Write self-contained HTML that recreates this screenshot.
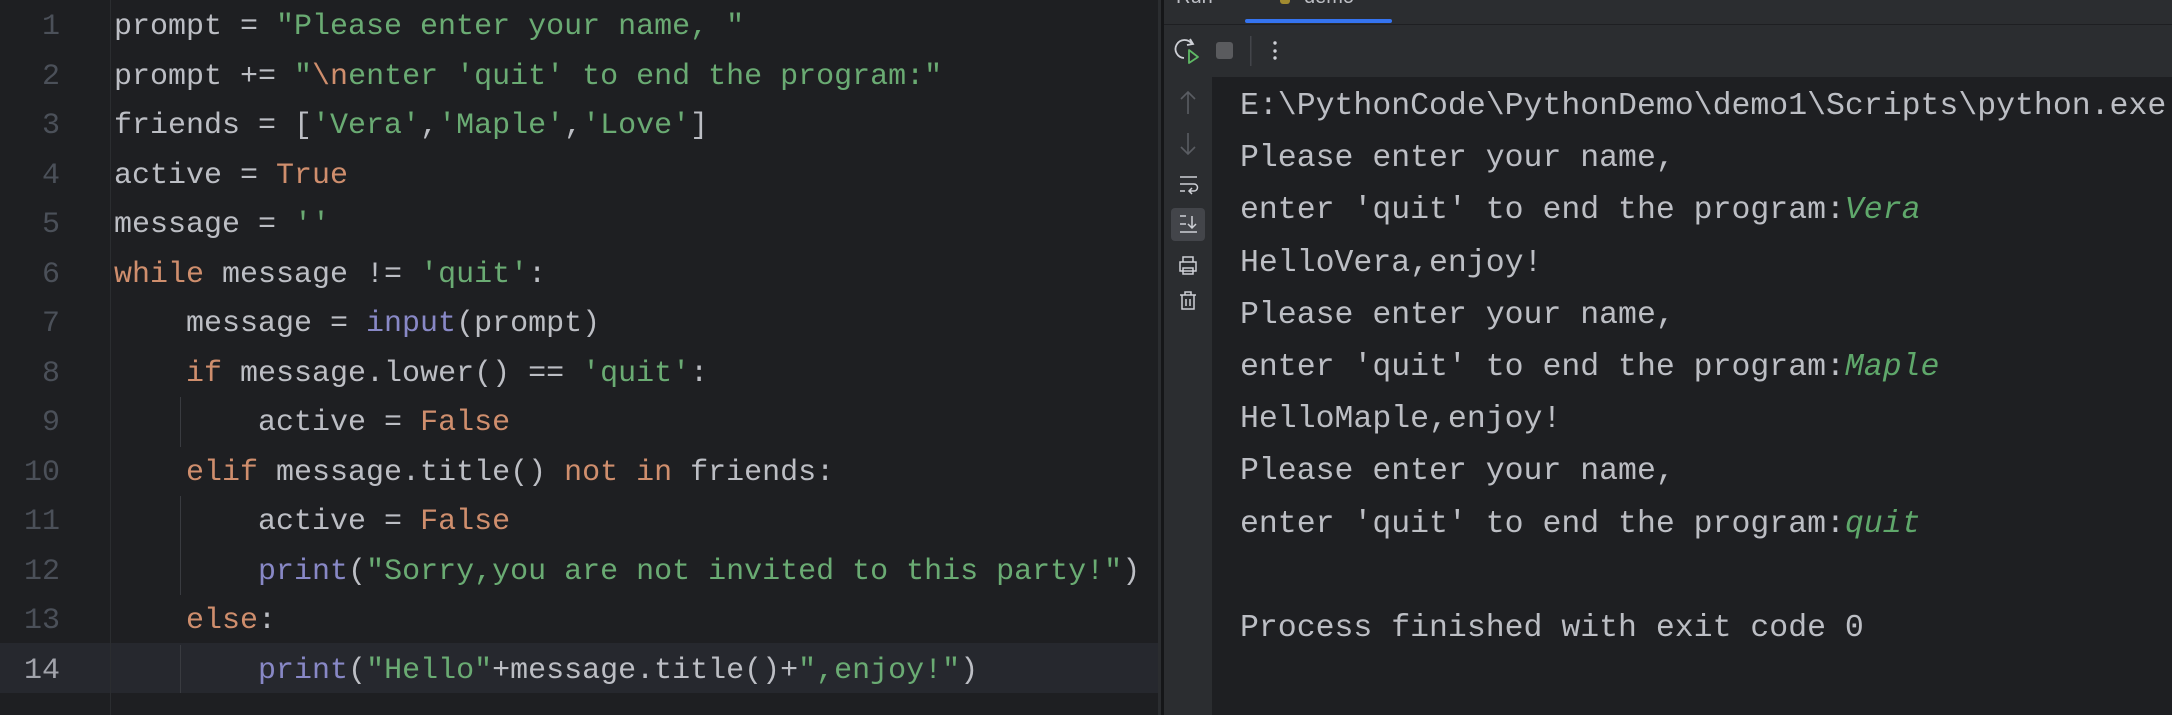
<!DOCTYPE html>
<html><head><meta charset="utf-8">
<style>
*{margin:0;padding:0;box-sizing:border-box}
body{width:2172px;height:715px;background:#1e1f22;overflow:hidden;position:relative;font-family:"Liberation Mono","DejaVu Sans Mono",monospace;font-size:30px;color:#bcbec4}
#ed{position:absolute;left:0;top:0;width:1161px;height:715px;background:#1e1f22}
.ln{position:absolute;left:0;width:60px;text-align:right;color:#4b5059;height:49.5px;line-height:49.5px}
.cl{position:absolute;left:114px;white-space:pre;height:49.5px;line-height:49.5px}
.s{color:#6aab73}.k{color:#cf8e6d}.b{color:#8888c6}
.g{position:absolute;width:1px;background:#393b40;left:180px}
#con{position:absolute;left:1161px;top:0;width:1011px;height:715px;background:#1e1f22;border-left:3px solid #151618;font-size:31.5px}
.cline{position:absolute;left:76px;white-space:pre;height:52.2px;line-height:52.2px}
.u{color:#5fa86b;font-style:italic}
</style></head><body>
<div id="ed">
<div style="position:absolute;left:0;top:643px;width:1161px;height:50px;background:#26282e"></div>
<div style="position:absolute;left:110px;top:0;width:1px;height:715px;background:#2b2d30"></div>
<div style="position:absolute;left:1158px;top:0;width:3px;height:715px;background:#2b2d30"></div>
<div class="g" style="top:397px;height:50px"></div>
<div class="g" style="top:496px;height:99px"></div>
<div class="g" style="top:645px;height:48px"></div>
<div class="ln" style="top:3px">1</div>
<div class="ln" style="top:52.5px">2</div>
<div class="ln" style="top:102px">3</div>
<div class="ln" style="top:151.5px">4</div>
<div class="ln" style="top:201px">5</div>
<div class="ln" style="top:250.5px">6</div>
<div class="ln" style="top:300px">7</div>
<div class="ln" style="top:349.5px">8</div>
<div class="ln" style="top:399px">9</div>
<div class="ln" style="top:448.5px">10</div>
<div class="ln" style="top:498px">11</div>
<div class="ln" style="top:547.5px">12</div>
<div class="ln" style="top:597px">13</div>
<div class="ln" style="top:646.5px;color:#a1a3ab">14</div>
<div class="cl" style="top:3px">prompt = <span class="s">"Please enter your name, "</span></div>
<div class="cl" style="top:52.5px">prompt += <span class="s">"</span><span class="k">\n</span><span class="s">enter 'quit' to end the program:"</span></div>
<div class="cl" style="top:102px">friends = [<span class="s">'Vera'</span>,<span class="s">'Maple'</span>,<span class="s">'Love'</span>]</div>
<div class="cl" style="top:151.5px">active = <span class="k">True</span></div>
<div class="cl" style="top:201px">message = <span class="s">''</span></div>
<div class="cl" style="top:250.5px"><span class="k">while</span> message != <span class="s">'quit'</span>:</div>
<div class="cl" style="top:300px">    message = <span class="b">input</span>(prompt)</div>
<div class="cl" style="top:349.5px">    <span class="k">if</span> message.lower() == <span class="s">'quit'</span>:</div>
<div class="cl" style="top:399px">        active = <span class="k">False</span></div>
<div class="cl" style="top:448.5px">    <span class="k">elif</span> message.title() <span class="k">not in</span> friends:</div>
<div class="cl" style="top:498px">        active = <span class="k">False</span></div>
<div class="cl" style="top:547.5px">        <span class="b">print</span>(<span class="s">"Sorry,you are not invited to this party!"</span>)</div>
<div class="cl" style="top:597px">    <span class="k">else</span>:</div>
<div class="cl" style="top:646.5px">        <span class="b">print</span>(<span class="s">"Hello"</span>+message.title()+<span class="s">",enjoy!"</span>)</div>
</div>
<div id="con">
<div style="position:absolute;left:0;top:0;width:1011px;height:77px;background:#2b2d30"></div>
<div style="position:absolute;left:0;top:24px;width:1011px;height:1px;background:#1e1f22"></div>
<div style="position:absolute;left:81px;top:19px;width:147px;height:4px;background:#3574f0;border-radius:2px"></div>
<div style="position:absolute;left:12px;top:-14px;font-family:'Liberation Sans',sans-serif;font-size:20px;color:#bcbec4">Run</div>
<div style="position:absolute;left:116px;top:-4px;width:10px;height:8px;background:#a08a30;border-radius:3px"></div>
<div style="position:absolute;left:140px;top:-14px;font-family:'Liberation Sans',sans-serif;font-size:20px;color:#bcbec4">demo</div>
<svg style="position:absolute;left:0;top:30px" width="160" height="45">
<path d="M28 14 A9 9 0 1 0 20 28" fill="none" stroke="#ced0d6" stroke-width="1.8"/>
<path d="M26 9 L29 14 L23 15" fill="none" stroke="#ced0d6" stroke-width="1.8"/>
<path d="M25 20 L34 27 L25 33 Z" fill="none" stroke="#5fb865" stroke-width="1.8" stroke-linejoin="round"/>
<rect x="52" y="12" width="17" height="17" rx="3" fill="#5a5b5e"/>
<rect x="86" y="6" width="1.5" height="30" fill="#43454a"/>
<circle cx="111" cy="13" r="1.7" fill="#ced0d6"/><circle cx="111" cy="21" r="1.7" fill="#ced0d6"/><circle cx="111" cy="28" r="1.7" fill="#ced0d6"/>
</svg>
<div style="position:absolute;left:0;top:77px;width:48px;height:638px;background:#2b2d30"></div>
<svg style="position:absolute;left:0;top:77px" width="48" height="260">
<path d="M24 15 V37 M17 22 L24 15 L31 22" fill="none" stroke="#5a5d63" stroke-width="1.6"/>
<path d="M24 56 V77 M17 70 L24 77 L31 70" fill="none" stroke="#5a5d63" stroke-width="1.6"/>
<path d="M16 100 H33 M16 107 H30 A3.5 3.5 0 0 1 30 114 H26 M28 111 L25 114 L28 117 M16 114 H21" fill="none" stroke="#ced0d6" stroke-width="1.5"/>
<rect x="7" y="131" width="34" height="33" rx="4" fill="#43454a"/>
<path d="M16 139 H22 M16 147 H22 M16 155 H33 M28 139 V151 M24 147 L28 151 L32 147" fill="none" stroke="#ced0d6" stroke-width="1.5"/>
<path d="M19 185 V180 H29 V185 M16 185 H32 V194 H16 Z M19 191 H29 V197 H19 Z" fill="none" stroke="#ced0d6" stroke-width="1.5"/>
<path d="M16 218 H32 M21 218 V215 H27 V218 M18 218 V232 H30 V218 M22 222 V229 M26 222 V229" fill="none" stroke="#ced0d6" stroke-width="1.5"/>
</svg>
<div class="cline" style="top:81px">E:\PythonCode\PythonDemo\demo1\Scripts\python.exe</div>
<div class="cline" style="top:133.2px">Please enter your name, </div>
<div class="cline" style="top:185.4px">enter 'quit' to end the program:<span class="u">Vera</span></div>
<div class="cline" style="top:237.6px">HelloVera,enjoy!</div>
<div class="cline" style="top:289.8px">Please enter your name, </div>
<div class="cline" style="top:342px">enter 'quit' to end the program:<span class="u">Maple</span></div>
<div class="cline" style="top:394.2px">HelloMaple,enjoy!</div>
<div class="cline" style="top:446.4px">Please enter your name, </div>
<div class="cline" style="top:498.6px">enter 'quit' to end the program:<span class="u">quit</span></div>
<div class="cline" style="top:603px">Process finished with exit code 0</div>
</div>
</body></html>
